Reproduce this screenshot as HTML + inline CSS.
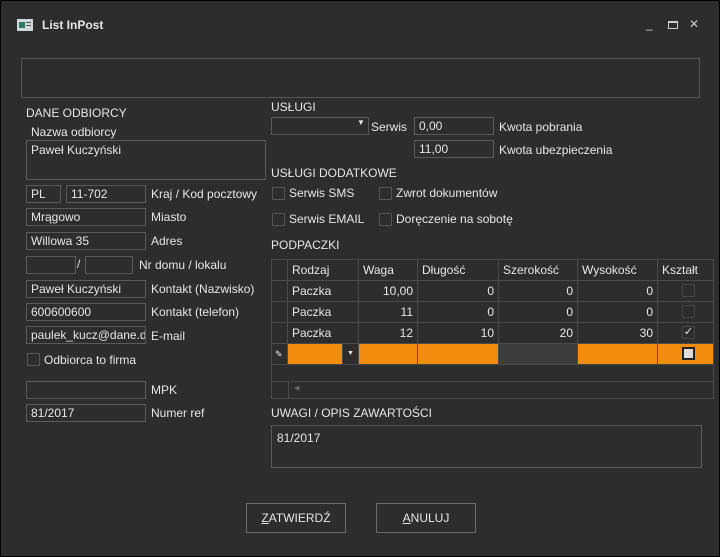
<!DOCTYPE html><html><head><style>
*{box-sizing:border-box;margin:0;padding:0}
body{width:720px;height:557px;background:#2d2d2d;font-family:"Liberation Sans",sans-serif;font-size:12px;color:#e6e6e6;position:relative;overflow:hidden;border:1px solid #000}
.a{position:absolute;white-space:nowrap}
.b{position:absolute;border:1px solid #5a5a5a;background:#2d2d2d;padding:2px 4px;white-space:nowrap}
.cb{position:absolute;width:13px;height:13px;border:1px solid #555}
.btn{position:absolute;border:1px solid #6a6a6a;text-align:center;line-height:28px}
.c{position:absolute;border-right:1px solid #4a4a4a;border-bottom:1px solid #4a4a4a;padding:3px 4px;height:21px}
</style></head><body>
<svg class="a" style="left:16px;top:18px" width="16" height="12"><rect x="0" y="0" width="16" height="12" fill="#cfd8dc"/><rect x="2" y="3" width="6" height="6" fill="#2e7d60"/><rect x="9" y="3" width="5" height="1" fill="#555"/><rect x="9" y="6" width="5" height="1" fill="#555"/></svg>
<div class="a" style="left:41px;top:17px;font-weight:bold;">List InPost</div>
<div class="a" style="left:645px;top:16px;color:#ccc">_</div>
<div class="a" style="left:667px;top:20px;width:10px;height:8px;border:1px solid #ccc;border-top-width:2px"></div>
<div class="a" style="left:688px;top:16px;color:#ccc">✕</div>
<div class="b" style="left:20px;top:57px;width:679px;height:40px;border-color:#555"></div>
<div class="a" style="left:25px;top:105px">DANE ODBIORCY</div>
<div class="a" style="left:30px;top:124px">Nazwa odbiorcy</div>
<div class="b" style="left:25px;top:139px;width:240px;height:40px">Paweł Kuczyński</div>
<div class="b" style="left:25px;top:184px;width:35px;height:18px;padding-top:1px">PL</div>
<div class="b" style="left:65px;top:184px;width:80px;height:18px;padding-top:1px">11-702</div>
<div class="a" style="left:150px;top:186px">Kraj / Kod pocztowy</div>
<div class="b" style="left:25px;top:207px;width:120px;height:18px;padding-top:1px">Mrągowo</div><div class="a" style="left:150px;top:209px">Miasto</div>
<div class="b" style="left:25px;top:231px;width:120px;height:18px;padding-top:1px">Willowa 35</div><div class="a" style="left:150px;top:233px">Adres</div>
<div class="b" style="left:25px;top:255px;width:50px;height:18px"></div><div class="a" style="left:76px;top:256px">/</div>
<div class="b" style="left:84px;top:255px;width:48px;height:18px"></div><div class="a" style="left:138px;top:257px">Nr domu / lokalu</div>
<div class="b" style="left:25px;top:279px;width:120px;height:18px;padding-top:1px">Paweł Kuczyński</div><div class="a" style="left:150px;top:281px">Kontakt (Nazwisko)</div>
<div class="b" style="left:25px;top:302px;width:120px;height:18px;padding-top:1px">600600600</div><div class="a" style="left:150px;top:304px">Kontakt (telefon)</div>
<div class="b" style="left:25px;top:325px;width:120px;height:18px;padding-top:1px;overflow:hidden">paulek_kucz@dane.de</div><div class="a" style="left:150px;top:328px">E-mail</div>
<div class="cb" style="left:26px;top:352px"></div><div class="a" style="left:43px;top:352px">Odbiorca to firma</div>
<div class="b" style="left:25px;top:380px;width:120px;height:18px"></div><div class="a" style="left:150px;top:382px">MPK</div>
<div class="b" style="left:25px;top:403px;width:120px;height:18px;padding-top:1px">81/2017</div><div class="a" style="left:150px;top:405px">Numer ref</div>

<div class="a" style="left:270px;top:99px">USŁUGI</div>
<div class="b" style="left:270px;top:116px;width:98px;height:18px"></div><div class="a" style="left:356px;top:117px;font-size:8px">▼</div>
<div class="a" style="left:370px;top:119px">Serwis</div>
<div class="b" style="left:413px;top:116px;width:80px;height:18px;padding-top:1px">0,00</div><div class="a" style="left:498px;top:119px">Kwota pobrania</div>
<div class="b" style="left:413px;top:139px;width:80px;height:18px;padding-top:1px">11,00</div><div class="a" style="left:498px;top:142px">Kwota ubezpieczenia</div>
<div class="a" style="left:270px;top:165px">USŁUGI DODATKOWE</div>
<div class="cb" style="left:271px;top:186px"></div><div class="a" style="left:288px;top:185px">Serwis SMS</div>
<div class="cb" style="left:378px;top:186px"></div><div class="a" style="left:395px;top:185px">Zwrot dokumentów</div>
<div class="cb" style="left:271px;top:212px"></div><div class="a" style="left:288px;top:211px">Serwis EMAIL</div>
<div class="cb" style="left:378px;top:212px"></div><div class="a" style="left:395px;top:211px">Doręczenie na sobotę</div>
<div class="a" style="left:270px;top:237px">PODPACZKI</div>
<div class="a" style="left:270px;top:258px;width:443px;height:140px;border:1px solid #4a4a4a;overflow:hidden">
<div class="c" style="left:0;top:0;width:16px"></div><div class="c" style="left:16px;top:0;width:71px">Rodzaj</div><div class="c" style="left:87px;top:0;width:59px">Waga</div><div class="c" style="left:146px;top:0;width:81px">Długość</div><div class="c" style="left:227px;top:0;width:79px">Szerokość</div><div class="c" style="left:306px;top:0;width:80px">Wysokość</div><div class="c" style="left:386px;top:0;width:60px">Kształt</div>
<div class="c" style="left:0;top:21px;width:16px"></div><div class="c" style="left:16px;top:21px;width:71px">Paczka</div><div class="c" style="left:87px;top:21px;width:59px;text-align:right">10,00</div><div class="c" style="left:146px;top:21px;width:81px;text-align:right">0</div><div class="c" style="left:227px;top:21px;width:79px;text-align:right">0</div><div class="c" style="left:306px;top:21px;width:80px;text-align:right">0</div><div class="c" style="left:386px;top:21px;width:60px"><div class="cb" style="left:24px;top:3px;border-color:#444"></div></div>
<div class="c" style="left:0;top:42px;width:16px"></div><div class="c" style="left:16px;top:42px;width:71px">Paczka</div><div class="c" style="left:87px;top:42px;width:59px;text-align:right">11</div><div class="c" style="left:146px;top:42px;width:81px;text-align:right">0</div><div class="c" style="left:227px;top:42px;width:79px;text-align:right">0</div><div class="c" style="left:306px;top:42px;width:80px;text-align:right">0</div><div class="c" style="left:386px;top:42px;width:60px"><div class="cb" style="left:24px;top:3px;border-color:#444"></div></div>
<div class="c" style="left:0;top:63px;width:16px"></div><div class="c" style="left:16px;top:63px;width:71px">Paczka</div><div class="c" style="left:87px;top:63px;width:59px;text-align:right">12</div><div class="c" style="left:146px;top:63px;width:81px;text-align:right">10</div><div class="c" style="left:227px;top:63px;width:79px;text-align:right">20</div><div class="c" style="left:306px;top:63px;width:80px;text-align:right">30</div><div class="c" style="left:386px;top:63px;width:60px"><div class="cb" style="left:24px;top:3px;border-color:#444;font-size:11px;line-height:11px;text-align:center">✓</div></div>
<div class="c" style="left:0;top:84px;width:16px;font-size:9px;padding:5px 3px">✎</div>
<div class="c" style="left:16px;top:84px;width:55px;background:#f28c0f"></div><div class="c" style="left:71px;top:84px;width:16px;font-size:7px;padding:6px 4px">▼</div>
<div class="c" style="left:87px;top:84px;width:59px;background:#f28c0f"></div><div class="c" style="left:146px;top:84px;width:81px;background:#f28c0f"></div><div class="c" style="left:227px;top:84px;width:79px;background:#3c3c3c"></div><div class="c" style="left:306px;top:84px;width:80px;background:#f28c0f"></div><div class="c" style="left:386px;top:84px;width:60px;background:#f28c0f"><div class="cb" style="left:24px;top:3px;border:2px solid #222;background:#ddd"></div></div>
<div class="a" style="left:0;top:121px;width:443px;height:18px;border-top:1px solid #4a4a4a"></div>
<div class="a" style="left:16px;top:121px;height:18px;border-left:1px solid #4a4a4a"></div>
<div class="a" style="left:22px;top:124px;font-size:7px;color:#666">◀</div>
</div>
<div class="a" style="left:270px;top:405px">UWAGI / OPIS ZAWARTOŚCI</div>
<div class="b" style="left:270px;top:424px;width:431px;height:43px;padding:5px 5px">81/2017</div>
<div class="btn" style="left:245px;top:502px;width:100px;height:30px"><u>Z</u>ATWIERDŹ</div>
<div class="btn" style="left:375px;top:502px;width:100px;height:30px"><u>A</u>NULUJ</div>
</body></html>
